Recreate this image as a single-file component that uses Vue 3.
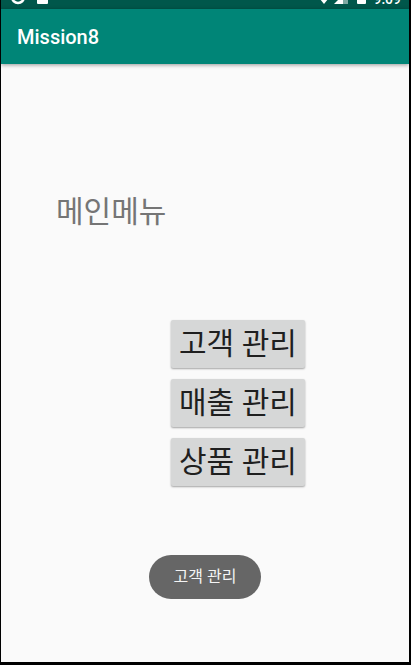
<script setup>
import { ref } from 'vue'

const menus = ['고객 관리', '매출 관리', '상품 관리']
const message = ref(menus[0])
</script>

<template>
  <div class="device">
    <header class="status">
      <svg class="notices" width="60" height="9" viewBox="0 0 60 9" aria-hidden="true">
        <circle cx="17" cy="-3" r="6" fill="none" stroke="#fff" stroke-width="2.5" />
        <rect x="36" y="-8" width="11" height="12" rx="1" fill="#fff" />
      </svg>
      <div class="system">
        <svg width="60" height="9" viewBox="0 0 60 9" aria-hidden="true">
          <path d="M6 -7H24L15 4Z" fill="#fff" />
          <path d="M25 4L39 -10V4Z" fill="#fff" />
          <path d="M34 -5L39 -10V4H34Z" fill="#7fa9a3" />
          <rect x="48" y="-10" width="9" height="14" rx="1" fill="#fff" />
        </svg>
        <span class="clock">9:09</span>
      </div>
    </header>
    <div class="appbar"><h1>Mission8</h1></div>
    <main>
      <h2>메인메뉴</h2>
      <nav class="menu">
        <button v-for="name in menus" :key="name" type="button" @click="message = name">{{ name }}</button>
      </nav>
      <div class="toast" role="status">{{ message }}</div>
    </main>
  </div>
</template>

<style>
body {
  background: #000;
}
</style>

<style scoped>
.device {
  box-sizing: border-box;
  display: flex;
  flex-direction: column;
  min-height: 100vh;
  border: solid #000;
  border-width: 0 2px 3px 1px;
  background: #fafafa;
  font-family: Roboto, "Noto Sans CJK KR", sans-serif;
}

.status {
  display: flex;
  justify-content: space-between;
  height: 9px;
  overflow: hidden;
  background: #00574b;
}

.status svg {
  display: block;
}

.system {
  display: flex;
  align-items: flex-end;
  gap: 4px;
  padding-right: 8px;
}

.clock {
  margin-bottom: 2px;
  color: #fff;
  font-size: 14px;
  font-weight: 500;
  line-height: 16px;
}

.appbar {
  display: flex;
  align-items: center;
  height: 55px;
  padding: 0 16px;
  background: #008577;
  box-shadow: 0 1px 4px rgba(0, 0, 0, 0.4);
}

h1 {
  margin: 0;
  color: #fff;
  font-size: 20px;
  font-weight: 500;
  line-height: 24px;
}

main {
  display: flex;
  flex: 1;
  flex-direction: column;
  padding-top: 126px;
}

h2 {
  margin: 0 0 0 55px;
  color: #757575;
  font-size: 30px;
  font-weight: 400;
  line-height: 44px;
}

.menu {
  display: flex;
  flex-direction: column;
  align-items: flex-start;
  gap: 11px;
  margin: 86px 0 0 170px;
}

button {
  box-sizing: border-box;
  height: 48px;
  padding: 0 8px;
  border: 0;
  border-radius: 2px;
  background: #d6d7d7;
  box-shadow: 0 1px 2px rgba(0, 0, 0, 0.35);
  color: #1f1f1f;
  font: inherit;
  font-size: 30px;
  line-height: 48px;
}

.toast {
  align-self: center;
  margin-top: 69px;
  padding: 10px 25px;
  border-radius: 22px;
  background: #666;
  color: #f4f4f4;
  font-size: 16px;
  line-height: 24px;
}
</style>
